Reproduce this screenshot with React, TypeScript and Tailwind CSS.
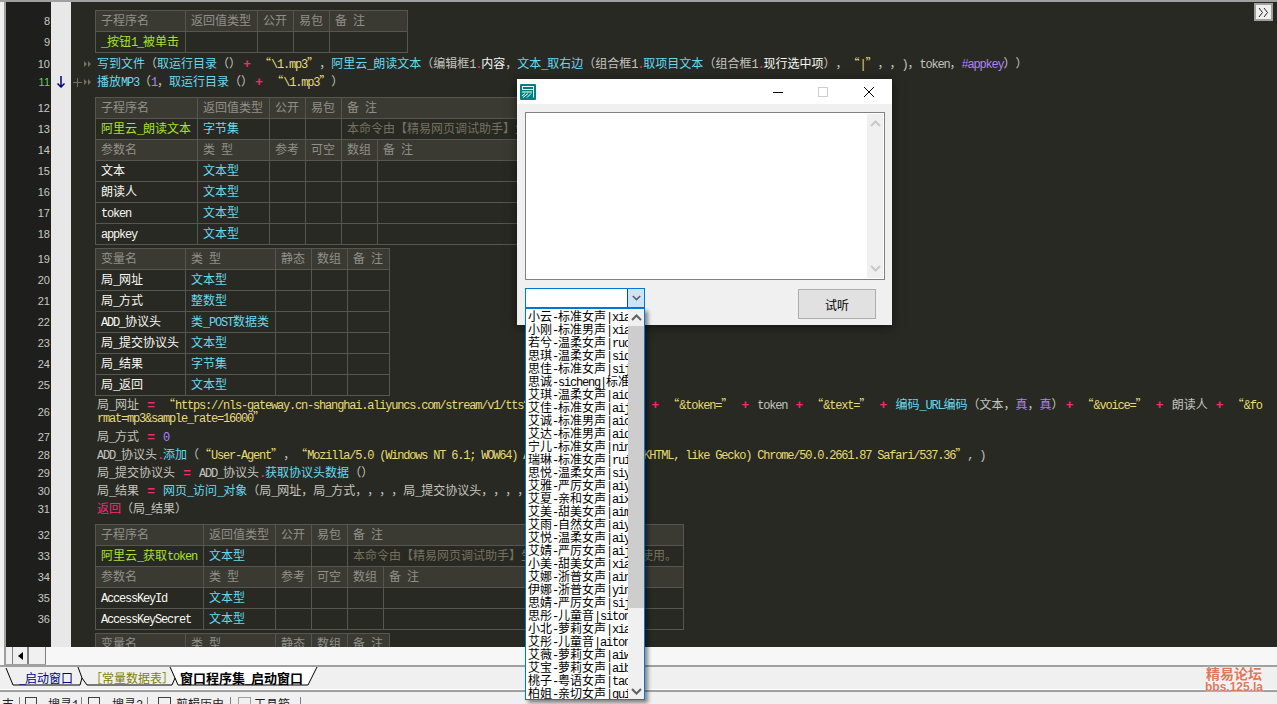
import type { ReactNode } from "react";

const tone = {
  c: "text-[#66d9ef]",
  w: "text-[#c4c4be]",
  b: "text-[#f8f8f2]",
  y: "text-[#e6db74]",
  p: "text-[#f92672]",
  v: "text-[#ae81ff]",
  g: "text-[#a6e22e]",
  h: "text-[#90908a]",
  m: "text-[#75715e]",
};
type Tone = keyof typeof tone;
type Token = [Tone, string];

// ascii runs get a narrower mono face so they sit at half the CJK width
function Mixed({ text }: { text: string }) {
  const parts = text.split(/([\x20-\x7e]+)/).filter(Boolean);
  return (
    <span className="whitespace-pre">
      {parts.map((p, i) =>
        /^[\x20-\x7e]+$/.test(p) ? (
          <span key={i} className="font-['Liberation_Mono'] text-[12px] leading-[0px] tracking-[-1.2px]">
            {p}
          </span>
        ) : (
          <span key={i}>{p}</span>
        )
      )}
    </span>
  );
}

function Code({ tokens }: { tokens: Token[] }) {
  return (
    <span className="whitespace-pre">
      {tokens.map(([t, s], i) =>
        s === "+" || s === "=" ? (
          <span key={i} className={`inline-block w-[12px] text-center font-['Liberation_Sans'] text-[13px] leading-[0px] font-bold ${tone[t]}`}>
            {s}
          </span>
        ) : (
          <span key={i} className={tone[t]}>
            <Mixed text={s} />
          </span>
        )
      )}
    </span>
  );
}

function Row({ n, green, mark, lead, className, children }: { n?: number; green?: boolean; mark?: ReactNode; lead?: ReactNode; className: string; children?: ReactNode }) {
  return (
    <div className={`flex shrink-0 ${className}`}>
      <div className={`w-[45px] shrink-0 bg-[#1e1f1c] flex items-center justify-end pr-[1px] font-['Liberation_Sans'] text-[11px] ${green ? "text-[#4ade4a]" : "text-[#c8c8c2]"}`}>
        {n}
      </div>
      <div className="w-[20px] shrink-0 bg-[#e8e8e8] flex items-center justify-center">{mark}</div>
      <div className="w-[24px] shrink-0 flex items-center justify-end gap-[2px] pr-[3px]">{lead}</div>
      <div className="flex-1 min-w-0 flex items-center whitespace-nowrap">{children}</div>
    </div>
  );
}

type Cell = [number, Tone, string];

function GridRow({ n, cells, head }: { n?: number; cells: Cell[]; head?: boolean }) {
  return (
    <Row n={n} className="h-[21px]">
      <div className={`flex h-full border-b border-l border-[#55564f] ${head ? "bg-[#3b3a32]" : ""}`}>
        {cells.map(([w, t, s], i) => (
          <div key={i} style={{ width: w }} className={`h-full border-r border-[#55564f] pl-[5px] pb-[3px] flex items-center overflow-hidden ${tone[t]}`}>
            <Mixed text={s} />
          </div>
        ))}
      </div>
    </Row>
  );
}

function TopEdge({ w }: { w: number }) {
  return (
    <Row className="h-[1px]">
      <div style={{ width: w }} className="h-[1px] bg-[#55564f]" />
    </Row>
  );
}

const Spacer = ({ className }: { className: string }) => <Row className={className} />;

function Fold() {
  return (
    <svg width="8" height="6" viewBox="0 0 8 6" className="fill-[#75715e]">
      <path d="M0 0l3 3-3 3zM4 0l3 3-3 3z" />
    </svg>
  );
}

const voices = [
  "小云-标准女声|xiaoyun", "小刚-标准男声|xiaogang", "若兮-温柔女声|ruoxi", "思琪-温柔女声|siqi", "思佳-标准女声|sijia",
  "思诚-sicheng|标准男声", "艾琪-温柔女声|aiqi", "艾佳-标准女声|aijia", "艾诚-标准男声|aicheng", "艾达-标准男声|aida",
  "宁儿-标准女声|ninger", "瑞琳-标准女声|ruilin", "思悦-温柔女声|siyue", "艾雅-严厉女声|aiya", "艾夏-亲和女声|aixia",
  "艾美-甜美女声|aimei", "艾雨-自然女声|aiyu", "艾悦-温柔女声|aiyue", "艾婧-严厉女声|aijing", "小美-甜美女声|xiaomei",
  "艾娜-浙普女声|aina", "伊娜-浙普女声|yina", "思婧-严厉女声|sijing", "思彤-儿童音|sitong", "小北-萝莉女声|xiaobei",
  "艾彤-儿童音|aitong", "艾薇-萝莉女声|aiwei", "艾宝-萝莉女声|aibao", "桃子-粤语女声|taozi", "柏姐-亲切女声|guijie",
];

function Chevron({ up, className }: { up?: boolean; className: string }) {
  return (
    <svg width="11" height="7" viewBox="0 0 11 7" fill="none" strokeWidth="2" className={className}>
      <path d={up ? "M1 6l4.5-4.5L10 6" : "M1 1l4.5 4.5L10 1"} stroke="currentColor" />
    </svg>
  );
}

function Dialog() {
  return (
    <div className="absolute left-[517px] top-[79px] w-[375px] h-[246px] bg-[#f0f0f0] shadow-[0_2px_10px_rgba(0,0,0,0.5)] flex flex-col">
      <div className="h-[25px] bg-white flex items-center shrink-0">
        <svg width="16" height="16" viewBox="0 0 16 16" className="ml-[3px]">
          <rect width="16" height="16" rx="1" fill="#008080" />
          <path d="M2 2.5h12M2.5 2.5v3M13.5 2.5v11M2 5.5h12M2 8h10M11 9.5l-4 4M8 9.5l-5 4M5 9.5l-3 2.5" stroke="#fff" strokeWidth="1" fill="none" />
        </svg>
        <div className="ml-auto flex items-center">
          <svg width="10" height="10" viewBox="0 0 10 10" className="mr-[35px]">
            <path d="M0 5.5h10" stroke="#000" />
          </svg>
          <svg width="10" height="10" viewBox="0 0 10 10" className="mr-[36px]">
            <rect x="0.5" y="0.5" width="9" height="9" fill="none" stroke="#ccc" />
          </svg>
          <svg width="10" height="10" viewBox="0 0 10 10" className="mr-[18px]">
            <path d="M0 0l10 10M10 0L0 10" stroke="#000" />
          </svg>
        </div>
      </div>
      <div className="flex-1 px-[8px] pt-[8px] flex flex-col">
        <div className="w-[360px] h-[168px] bg-white border border-[#828282] flex justify-end p-[1px]">
          <div className="w-[16px] bg-[#f0f0f0] flex flex-col items-center justify-between py-[6px]">
            <Chevron up className="text-[#c8c8c8]" />
            <Chevron className="text-[#c8c8c8]" />
          </div>
        </div>
        <div className="flex justify-between mt-[8px] pr-[8px]">
          <div className="w-[120px] h-[20px] bg-white border border-[#0078d7] flex justify-end">
            <div className="w-[17px] bg-[#cce4f7] border-l border-[#005499] flex items-center justify-center">
              <Chevron className="text-[#606060] w-[9px] h-[6px]" />
            </div>
          </div>
          <div className="mt-[1px] w-[78px] h-[30px] bg-[#e1e1e1] border border-[#adadad] flex items-center justify-center text-black text-[12px]">
            试听
          </div>
        </div>
      </div>
    </div>
  );
}

function VoiceList() {
  return (
    <div className="absolute left-[525px] top-[308px] w-[120px] h-[392px] bg-white border border-[#0078d7] shadow-[3px_3px_4px_rgba(0,0,0,0.45)] flex">
      <div className="flex-1 min-w-0 overflow-hidden pl-[2px] text-black">
        {voices.map((v) => (
          <div key={v} className="h-[13px] leading-[13px] whitespace-nowrap">
            <Mixed text={v} />
          </div>
        ))}
      </div>
      <div className="w-[16px] shrink-0 bg-[#f0f0f0] flex flex-col">
        <div className="h-[17px] flex items-center justify-center">
          <Chevron up className="text-[#606060]" />
        </div>
        <div className="h-[282px] bg-[#cdcdcd]" />
        <div className="flex-1 flex items-end justify-center pb-[4px]">
          <Chevron className="text-[#606060]" />
        </div>
      </div>
    </div>
  );
}

function TabOutline() {
  return (
    <svg width="330" height="20" viewBox="0 0 330 20" fill="none" stroke="#000" className="absolute left-0 top-0">
      <path d="M172 0h145l-9 18H178l-3-7z" fill="#fff" stroke="none" />
      <path d="M6 1l7 17h67l2-7-4-11" />
      <path d="M82 11l5 7h85l3-7-5-11" />
      <path d="M175 11l3 7h130l9-18" />
    </svg>
  );
}

const note = "本命令由【精易网页调试助手】生成，请勿删除此信息使用。";

export default function App() {
  return (
    <div className="relative w-[1277px] h-[704px] overflow-hidden bg-[#f0f0f0] font-['Noto_Sans_CJK_SC','Liberation_Sans',sans-serif] text-[12px] leading-[13px] [text-spacing-trim:space-all]">
      <div className="h-[2px] bg-[#a0a0a0]" />
      <div className="h-[645px] flex">
        <div className="w-[6px] shrink-0 bg-[#f0f0f0] border-r-2 border-[#a0a0a0]" />
        <div className="flex-1 min-w-0 bg-[#282923] flex flex-col overflow-hidden">
          <Spacer className="h-[8px]" />
          <TopEdge w={313} />
          <GridRow n={8} head cells={[[90, "h", "子程序名"], [72, "h", "返回值类型"], [36, "h", "公开"], [36, "h", "易包"], [78, "h", "备 注"]]} />
          <GridRow n={9} cells={[[90, "g", "_按钮1_被单击"], [72, "h", ""], [36, "h", ""], [36, "h", ""], [78, "h", ""]]} />
          <Spacer className="h-[2px]" />
          <Row n={10} className="h-[18px] pl-0" lead={<Fold />}>
            <span className="pl-[2px] pb-[3px]">
              <Code tokens={[["c", "写到文件"], ["w", "（"], ["c", "取运行目录"], ["w", "（）"], ["p", "+"], ["w", " "], ["y", "“\\1.mp3”"], ["w", "，"], ["c", "阿里云_朗读文本"], ["w", "（编辑框1"], ["p", "."], ["b", "内容"], ["w", "，"], ["c", "文本_取右边"], ["w", "（组合框1"], ["p", "."], ["c", "取项目文本"], ["w", "（组合框1"], ["p", "."], ["b", "现行选中项"], ["w", "），"], ["y", "“|”"], ["w", "，，)，token，"], ["v", "#appkey"], ["w", "））"]]} />
            </span>
          </Row>
          <Row n={11} green className="h-[18px]" mark={
            <svg width="10" height="12" viewBox="0 0 10 12" fill="none" stroke="#000080" strokeWidth="1.5">
              <path d="M5 0v11M1.5 7.5L5 11l3.5-3.5" />
            </svg>
          } lead={
            <>
              <svg width="9" height="9" viewBox="0 0 9 9" stroke="#75715e">
                <path d="M0 4.5h9M4.5 0v9" />
              </svg>
              <Fold />
            </>
          }>
            <span className="pl-[2px] pb-[3px]">
              <Code tokens={[["c", "播放MP3"], ["w", "（"], ["v", "1"], ["w", "，"], ["c", "取运行目录"], ["w", "（）"], ["p", "+"], ["w", " "], ["y", "“\\1.mp3”"], ["w", "）"]]} />
            </span>
          </Row>
          <Spacer className="h-[6px]" />
          <TopEdge w={596} />
          <GridRow n={12} head cells={[[102, "h", "子程序名"], [72, "h", "返回值类型"], [36, "h", "公开"], [36, "h", "易包"], [349, "h", "备 注"]]} />
          <GridRow n={13} cells={[[102, "g", "阿里云_朗读文本"], [72, "c", "字节集"], [36, "h", ""], [36, "h", ""], [349, "m", note]]} />
          <GridRow n={14} head cells={[[102, "h", "参数名"], [72, "h", "类 型"], [36, "h", "参考"], [36, "h", "可空"], [36, "h", "数组"], [313, "h", "备 注"]]} />
          {[["文本", 15], ["朗读人", 16], ["token", 17], ["appkey", 18]].map(([name, n]) => (
            <GridRow key={n} n={n as number} cells={[[102, "b", name as string], [72, "c", "文本型"], [36, "h", ""], [36, "h", ""], [36, "h", ""], [313, "h", ""]]} />
          ))}
          <Spacer className="h-[3px]" />
          <TopEdge w={295} />
          <GridRow n={19} head cells={[[90, "h", "变量名"], [90, "h", "类 型"], [36, "h", "静态"], [36, "h", "数组"], [42, "h", "备 注"]]} />
          {[["局_网址", "文本型", 20], ["局_方式", "整数型", 21], ["ADD_协议头", "类_POST数据类", 22], ["局_提交协议头", "文本型", 23], ["局_结果", "字节集", 24], ["局_返回", "文本型", 25]].map(([a, b, n]) => (
            <GridRow key={n} n={n as number} cells={[[90, "b", a as string], [90, "c", b as string], [36, "h", ""], [36, "h", ""], [42, "h", ""]]} />
          ))}
          <Row n={26} className="h-[32px]">
            <div className="pl-[2px] pb-[4px]">
              <div className="h-[13px]">
                <Code tokens={[["w", "局_网址 "], ["p", "="], ["w", " "], ["y", "“https://nls-gateway.cn-shanghai.aliyuncs.com/stream/v1/tts?appkey=”"], ["w", " "], ["p", "+"], ["w", " appkey "], ["p", "+"], ["w", " "], ["y", "“&token=”"], ["w", " "], ["p", "+"], ["w", " token "], ["p", "+"], ["w", " "], ["y", "“&text=”"], ["w", " "], ["p", "+"], ["w", " "], ["c", "编码_URL编码"], ["w", "（文本，"], ["v", "真"], ["w", "，"], ["v", "真"], ["w", "）"], ["p", "+"], ["w", " "], ["y", "“&voice=”"], ["w", " "], ["p", "+"], ["w", " 朗读人 "], ["p", "+"], ["w", " "], ["y", "“&fo"]]} />
              </div>
              <div className="h-[13px]">
                <Code tokens={[["y", "rmat=mp3&sample_rate=16000”"]]} />
              </div>
            </div>
          </Row>
          <Row n={27} className="h-[18px]">
            <span className="pl-[2px] pb-[3px]"><Code tokens={[["w", "局_方式 "], ["p", "="], ["w", " "], ["v", "0"]]} /></span>
          </Row>
          <Row n={28} className="h-[18px]">
            <span className="pl-[2px] pb-[3px]"><Code tokens={[["w", "ADD_协议头"], ["p", "."], ["c", "添加"], ["w", "（"], ["y", "“User-Agent”"], ["w", "，"], ["y", "“Mozilla/5.0 (Windows NT 6.1; WOW64) AppleWebKit/537.36 (KHTML, like Gecko) Chrome/50.0.2661.87 Safari/537.36”"], ["w", ", )"]]} /></span>
          </Row>
          <Row n={29} className="h-[18px]">
            <span className="pl-[2px] pb-[3px]"><Code tokens={[["w", "局_提交协议头 "], ["p", "="], ["w", " ADD_协议头"], ["p", "."], ["c", "获取协议头数据"], ["w", "（）"]]} /></span>
          </Row>
          <Row n={30} className="h-[18px]">
            <span className="pl-[2px] pb-[3px]"><Code tokens={[["w", "局_结果 "], ["p", "="], ["w", " "], ["c", "网页_访问_对象"], ["w", "（局_网址，局_方式，，，，局_提交协议头，，，，）"]]} /></span>
          </Row>
          <Row n={31} className="h-[18px]">
            <span className="pl-[2px] pb-[3px]"><Code tokens={[["p", "返回"], ["w", "（局_结果）"]]} /></span>
          </Row>
          <Spacer className="h-[6px]" />
          <TopEdge w={589} />
          <GridRow n={32} head cells={[[108, "h", "子程序名"], [72, "h", "返回值类型"], [36, "h", "公开"], [36, "h", "易包"], [336, "h", "备 注"]]} />
          <GridRow n={33} cells={[[108, "g", "阿里云_获取token"], [72, "c", "文本型"], [36, "h", ""], [36, "h", ""], [336, "m", note]]} />
          <GridRow n={34} head cells={[[108, "h", "参数名"], [72, "h", "类 型"], [36, "h", "参考"], [36, "h", "可空"], [36, "h", "数组"], [300, "h", "备 注"]]} />
          {[["AccessKeyId", 35], ["AccessKeySecret", 36]].map(([name, n]) => (
            <GridRow key={n} n={n as number} cells={[[108, "b", name as string], [72, "c", "文本型"], [36, "h", ""], [36, "h", ""], [36, "h", ""], [300, "h", ""]]} />
          ))}
          <Spacer className="h-[3px]" />
          <TopEdge w={295} />
          <GridRow head cells={[[90, "h", "变量名"], [90, "h", "类 型"], [36, "h", "静态"], [36, "h", "数组"], [42, "h", "备 注"]]} />
        </div>
      </div>

      {/* hscroll */}
      <div className="h-[18px] bg-[#f7f7f7] pl-[4px] flex">
        <div className="flex border-l-2 border-[#a0a0a0] pl-0 h-[18px] border-b border-b-[#a0a0a0]">
          <div className="w-[7px] bg-[#f0f0f0] border-r border-[#808080]" />
          <div className="w-[16px] bg-[#f0f0f0] border-r-2 border-[#808080] flex items-center justify-center">
            <span className="w-0 h-0 border-y-[4px] border-y-transparent border-r-[5px] border-r-black" />
          </div>
          <div className="w-[17px] bg-[#f0f0f0] border-r border-[#808080]" />
        </div>
      </div>

      {/* sheet tabs */}
      <div className="relative h-[22px] border-t-2 border-[#a0a0a0] box-content">
        <TabOutline />
        <div className="relative flex h-[20px] items-center pl-[19px]">
          <span className="w-[71px] text-[#000080]"><Mixed text="_启动窗口" /></span>
          <span className="w-[90px] text-[#808000]">［常量数据表］</span>
          <span className="font-bold text-black text-[13px]"><Mixed text="窗口程序集_启动窗口" /></span>
        </div>
      </div>
      <div className="h-[1px] bg-white" />
      <div className="h-[2px] bg-[#a0a0a0]" />
      {/* bottom panel tabs, cut by the window edge */}
      <div className="h-[12px] pt-[5px] flex items-start overflow-hidden text-[#202020]">
        <span className="w-[20px] pl-[2px] border-r border-[#808080]">支</span>
        <span className="w-[62px] ml-[0px] pl-[5px] flex gap-[11px] border-r border-[#808080]"><span className="w-[12px] h-[12px] border border-[#404040] shrink-0" /><Mixed text="搜寻1" /></span>
        <span className="w-[63px] ml-[3px] pl-[3px] flex gap-[12px] border-r border-[#808080]"><span className="w-[12px] h-[12px] border border-[#404040] shrink-0" /><Mixed text="搜寻2" /></span>
        <span className="w-[82px] ml-[1px] pl-[9px] flex gap-[5px] border-r border-[#808080]"><span className="w-[13px] h-[12px] border border-[#404040] shrink-0" /><Mixed text="剪辑历史" /></span>
        <span className="w-[67px] ml-[3px] pl-[4px] flex gap-[3px] border-r border-[#808080]"><span className="w-[13px] h-[12px] border border-[#a0a0a0] shrink-0" /><Mixed text="工具箱" /></span>
      </div>

      <div className="absolute left-[1199px] top-[665px] w-[70px] text-center text-[#e2765a] [text-shadow:0_0_2px_#fff]">
        <div className="text-[14px] leading-[16px] font-bold">精易论坛</div>
        <div className="font-['Liberation_Sans'] text-[12px] leading-[13px] font-bold">bbs.125.la</div>
      </div>

      <div className="absolute left-[1254px] top-[3px] w-[19px] h-[18px] bg-[#f0f0f0] border-2 border-[#a0a0a0] flex items-center justify-center">
        <svg width="11" height="9" viewBox="0 0 11 9" fill="none" stroke="#202020">
          <path d="M1 0l3.5 4.5L1 9M6 0l3.5 4.5L6 9" />
        </svg>
      </div>

      <Dialog />
      <VoiceList />
    </div>
  );
}
